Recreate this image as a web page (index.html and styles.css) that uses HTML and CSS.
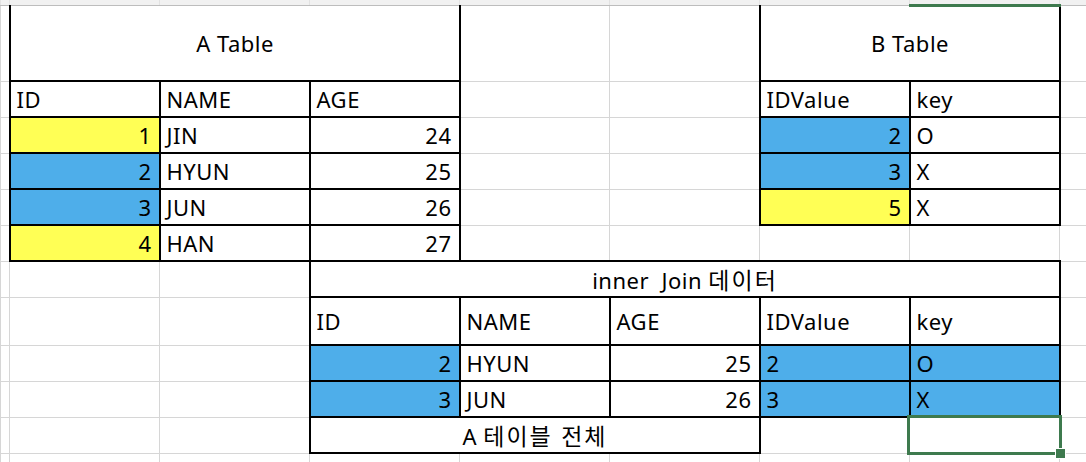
FILE: index.html
```html
<!DOCTYPE html>
<html lang="ko">
<head>
<meta charset="utf-8">
<title>Inner Join</title>
<link rel="stylesheet" href="styles.css">
</head>
<body>
<table class="sheet">
  <colgroup>
    <col class="col-edge">
    <col class="col"><col class="col"><col class="col"><col class="col"><col class="col"><col class="col"><col class="col">
    <col class="col-rest">
  </colgroup>
  <tr class="row-head">
    <td></td><td></td><td></td><td></td><td></td><td></td><td></td><td class="head-sel"></td><td></td>
  </tr>
  <tr class="row-title">
    <td></td>
    <td colspan="3" class="b title">A Table</td>
    <td></td><td></td>
    <td colspan="2" class="b title">B Table</td>
    <td></td>
  </tr>
  <tr class="row">
    <td></td>
    <td class="b">ID</td><td class="b">NAME</td><td class="b">AGE</td>
    <td></td><td></td>
    <td class="b">IDValue</td><td class="b">key</td>
    <td></td>
  </tr>
  <tr class="row">
    <td></td>
    <td class="b num yellow">1</td><td class="b">JIN</td><td class="b num">24</td>
    <td></td><td></td>
    <td class="b num blue">2</td><td class="b">O</td>
    <td></td>
  </tr>
  <tr class="row">
    <td></td>
    <td class="b num blue">2</td><td class="b">HYUN</td><td class="b num">25</td>
    <td></td><td></td>
    <td class="b num blue">3</td><td class="b">X</td>
    <td></td>
  </tr>
  <tr class="row">
    <td></td>
    <td class="b num blue">3</td><td class="b">JUN</td><td class="b num">26</td>
    <td></td><td></td>
    <td class="b num yellow">5</td><td class="b">X</td>
    <td></td>
  </tr>
  <tr class="row">
    <td></td>
    <td class="b num yellow">4</td><td class="b">HAN</td><td class="b num">27</td>
    <td></td><td></td><td></td><td></td><td></td>
  </tr>
  <tr class="row">
    <td></td><td></td><td></td>
    <td colspan="5" class="b center">inner&nbsp; Join <span class="ko">데이터</span></td>
    <td></td>
  </tr>
  <tr class="row-tall">
    <td></td><td></td><td></td>
    <td class="b">ID</td><td class="b">NAME</td><td class="b">AGE</td><td class="b">IDValue</td><td class="b">key</td>
    <td></td>
  </tr>
  <tr class="row">
    <td></td><td></td><td></td>
    <td class="b num blue">2</td><td class="b">HYUN</td><td class="b num">25</td><td class="b blue">2</td><td class="b blue">O</td>
    <td></td>
  </tr>
  <tr class="row">
    <td></td><td></td><td></td>
    <td class="b num blue">3</td><td class="b">JUN</td><td class="b num">26</td><td class="b blue">3</td><td class="b blue">X</td>
    <td></td>
  </tr>
  <tr class="row">
    <td></td><td></td><td></td>
    <td colspan="3" class="b center">A <span class="ko">테이블 전체</span></td>
    <td></td>
    <td class="sel"><div class="sel-box"><span class="sel-handle"></span></div></td>
    <td></td>
  </tr>
  <tr class="row-end">
    <td></td><td></td><td></td><td></td><td></td><td></td><td></td><td></td><td></td>
  </tr>
</table>
</body>
</html>
```

FILE: styles.css
```css
html, body {
  margin: 0;
  padding: 0;
  background: #ffffff;
  overflow: hidden;
}

.sheet {
  border-collapse: collapse;
  table-layout: fixed;
  width: 1086px;
  font-family: "Noto Sans", "Noto Sans CJK KR", sans-serif;
  font-size: 22px;
  letter-spacing: 0.5px;
  color: #000000;
}

.col-edge { width: 9px; }
.col { width: 150px; }
.col-rest { width: 27px; }

.sheet td {
  box-sizing: border-box;
  border: 1px solid #d6d6d6;
  padding: 0 5px 0 6px;
  line-height: 1;
  white-space: nowrap;
  overflow: visible;
  vertical-align: middle;
  text-align: left;
}

.ko {
  font-family: "Noto Sans CJK KR", sans-serif;
  font-size: 23px;
  font-weight: 400;
  letter-spacing: 2px;
  color: #000000;
}

.row-head td {
  height: 5px;
  background: #f1f1f1;
  border-top: none;
  border-bottom: 1px solid #bdbdbd;
  border-left: 1px solid #e2e2e2;
  border-right: 1px solid #e2e2e2;
  padding: 0;
}

.sheet .row-head td.head-sel {
  border-bottom: 3px solid #3e7a4e;
}

.row-title td { height: 76px; }
.row td { height: 36px; }
.row-tall td { height: 48px; }
.row-end td { height: 9px; border-bottom: none; }

.sheet td.b {
  border: 2px solid #000000;
}

.sheet td.title {
  border-top: none;
  text-align: center;
}

.sheet td.center { text-align: center; }
.sheet td.num { text-align: right; padding-right: 7px; }

.yellow { background: #ffff55; }
.blue { background: #4eaeea; }

.sheet td.sel {
  position: relative;
  padding: 0;
}

.sel-box {
  position: absolute;
  left: -3px;
  top: -3px;
  right: -3px;
  bottom: -2px;
  border: 3px solid #3e7a4e;
}

.sel-handle {
  position: absolute;
  right: -7px;
  bottom: -7px;
  width: 9px;
  height: 9px;
  background: #3e7a4e;
  border: 1px solid #ffffff;
}
```
